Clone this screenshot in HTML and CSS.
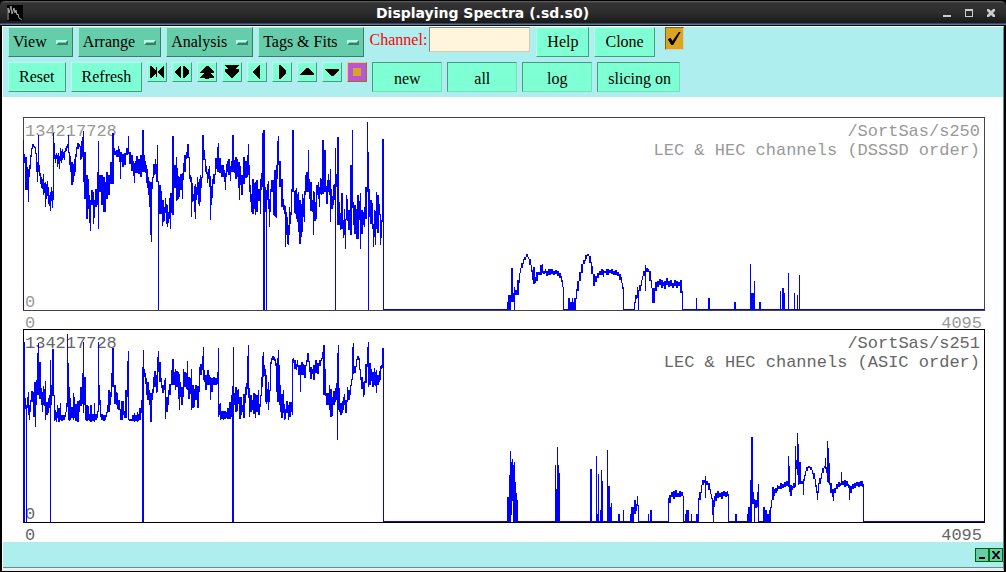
FILE: index.html
```html
<!DOCTYPE html>
<html lang="en">
<head>
  <meta charset="UTF-8">
  <title>Displaying Spectra (.sd.s0)</title>
  <link rel="stylesheet" href="styles.css">
</head>
<body>
  <header class="titlebar">
    <svg class="app-icon" viewBox="0 0 16 16">
      <rect width="16" height="16" fill="#000"/>
      <path d="M1 15V3L2 8L4 1L5 9L7 3L8 8L9 5L10 10L11 9L12 13L15 15" fill="none" stroke="#aaa"/>
    </svg>
    <h1>Displaying Spectra (.sd.s0)</h1>
    <div class="window-buttons">
      <button aria-label="Minimize"><svg viewBox="0 0 10 10"><path d="M1 7h8v2H1z"/></svg></button>
      <button aria-label="Maximize"><svg viewBox="0 0 10 10"><path fill-rule="evenodd" d="M1 1h8v8H1zM2 3v5h6V3z"/></svg></button>
      <button aria-label="Close"><svg viewBox="0 0 10 10"><path d="M1 1h2l2 2 2-2h2v2L7 5l2 2v2H7L5 7 3 9H1V7l2-2-2-2z"/></svg></button>
    </div>
  </header>

  <main class="window">
    <div class="toolbar">
      <div class="row">
        <button class="menu">View <span class="mark"></span></button>
        <button class="menu">Arrange <span class="mark"></span></button>
        <button class="menu">Analysis <span class="mark"></span></button>
        <button class="menu">Tags &amp; Fits <span class="mark"></span></button>
        <div class="channel">
          <label for="channel">Channel:</label>
          <input type="text" id="channel">
        </div>
        <button class="btn">Help</button>
        <button class="btn">Clone</button>
        <input type="checkbox" class="toggle" aria-label="Enable" checked>
      </div>
      <div class="row">
        <button class="btn">Reset</button>
        <button class="btn">Refresh</button>
        <button class="icon" aria-label="Compress"><svg viewBox="0 0 18 18"><path d="M2 3h1l5 5V4h1v10H8v-4l-5 5H2zM15 3h1v12h-1l-5-5V8z"/></svg></button>
        <button class="icon" aria-label="Expand"><svg viewBox="0 0 18 18"><path d="M8 3v12H7L2 10V8l5-5zM10 3h1l5 5v2l-5 5h-1z"/></svg></button>
        <button class="icon" aria-label="Page up"><svg viewBox="0 0 18 18"><path d="M8 3h2l6 6v1h-4l4 4v1h-5v1H7v-1H2v-1l4-4H2V9z"/></svg></button>
        <button class="icon" aria-label="Page down"><svg viewBox="0 0 18 18"><path d="M2 2h14v1l-4 3h4v2l-6 7H8L2 8V6h4L2 3z"/></svg></button>
        <button class="icon" aria-label="Left"><svg viewBox="0 0 18 18"><path d="M11 2h1v14h-1L5 10V8z"/></svg></button>
        <button class="icon" aria-label="Right"><svg viewBox="0 0 18 18"><path d="M6 2h1l6 6v2l-6 6H6z"/></svg></button>
        <button class="icon" aria-label="Up"><svg viewBox="0 0 18 18"><path d="M2 12v-1l6-6h2l6 6v1z"/></svg></button>
        <button class="icon" aria-label="Down"><svg viewBox="0 0 18 18"><path d="M2 6h14v1l-6 6H8L2 7z"/></svg></button>
        <button class="icon stop" aria-label="Select region"><svg viewBox="0 0 18 18"><path d="M5 5h8v8H5z"/></svg></button>
        <button class="btn sunken">new</button>
        <button class="btn sunken">all</button>
        <button class="btn sunken">log</button>
        <button class="btn sunken wide">slicing on</button>
      </div>
    </div>

    <div class="canvas">
      <section class="plot">
        <div class="frame">
          <span class="max">134217728</span>
          <span class="min">0</span>
          <p class="name">/SortSas/s250<br>LEC &amp; HEC channels (DSSSD order)</p>
          <svg class="trace" viewBox="1 1 960 192" preserveAspectRatio="none"><path id="s250"/></svg>
        </div>
        <div class="axis"><span>0</span><span>4095</span></div>
      </section>
      <section class="plot active">
        <div class="frame">
          <span class="max">134217728</span>
          <span class="min">0</span>
          <p class="name">/SortSas/s251<br>LEC &amp; HEC channels (ASIC order)</p>
          <svg class="trace" viewBox="1 1 960 192" preserveAspectRatio="none"><path id="s251"/></svg>
        </div>
        <div class="axis"><span>0</span><span>4095</span></div>
      </section>
    </div>

    <footer class="statusbar">
      <button aria-label="Shrink"><svg viewBox="0 0 10 10"><path d="M2 7h6v2H2z"/></svg></button>
      <button aria-label="Dismiss"><svg viewBox="0 0 10 10"><path d="M1 1h2l2 3 2-3h2v1L6 5l3 3v1H7L5 6 3 9H1V8l3-3-3-3z"/></svg></button>
    </footer>
  </main>

  <script src="spectra.js"></script>
</body>
</html>
```
FILE: styles.css
```css
* {
  margin: 0;
  padding: 0;
  box-sizing: border-box;
}

body {
  height: 100vh;
  display: flex;
  flex-direction: column;
  background: #000;
  font-family: "Liberation Serif", "Times New Roman", serif;
  font-size: 16px;
  overflow: hidden;
}

button {
  font: inherit;
  color: #000;
}

svg {
  display: block;
}

/* title bar */
.titlebar {
  height: 26px;
  display: flex;
  align-items: center;
  padding: 0 10px 0 7px;
  border-top: 1px solid #000;
  border-bottom: 1px solid #000;
  border-radius: 5px 5px 0 0;
  background: linear-gradient(#666 0, #333 2px, #2e2e2e 11px, #191919 22px, #5078a8 23px);
}

.titlebar h1 {
  flex: 1;
  text-align: center;
  font: bold 14px "DejaVu Sans", sans-serif;
  color: #fff;
}

.app-icon {
  width: 16px;
  height: 16px;
}

.window-buttons {
  display: flex;
  gap: 12px;
}

.window-buttons button {
  width: 10px;
  height: 10px;
  border: none;
  background: none;
}

.window-buttons svg {
  width: 10px;
  height: 10px;
  fill: #ccc;
}

/* window body */
.window {
  flex: 1;
  min-height: 0;
  display: flex;
  flex-direction: column;
  margin: 0 2px 1px;
  border: 1px solid #fff;
  border-right-color: #5f8f8f;
  border-bottom: 3px solid #eee;
}

.toolbar {
  display: flex;
  flex-direction: column;
  gap: 5px;
  padding: 0 5px 5px;
  background: #afeeee;
}

.row {
  display: flex;
  align-items: flex-start;
  gap: 5px;
}

.menu,
.btn {
  height: 30px;
  padding: 0 10px;
  border: 1px solid;
  border-color: #b0ffe8 #4a9a80 #4a9a80 #b0ffe8;
  background: #7fffd4;
  white-space: nowrap;
}

.menu {
  display: flex;
  align-items: center;
  justify-content: space-between;
  gap: 9px;
  padding: 0 4px;
  border-color: #a3f5d8 #3c7b66 #3c7b66 #a3f5d8;
  background: #66cdaa;
}

.mark {
  width: 12px;
  height: 5px;
  border: 2px solid;
  border-color: #b5ffe8 #3c7b66 #3c7b66 #b5ffe8;
}

.btn.sunken {
  width: 70px;
  padding-top: 4px;
  border-color: #4a9a80 #70e0ba #70e0ba #4a9a80;
}

.btn.wide {
  width: 83px;
}

.channel {
  display: flex;
  align-items: center;
  gap: 2px;
  padding: 0 1px;
}

.channel label {
  color: #f00;
}

.channel input {
  width: 101px;
  height: 25px;
  border: 1px solid;
  border-color: #888 #d5cbb5 #d5cbb5 #888;
  background: #fff5dc;
}

.toggle {
  appearance: none;
  width: 19px;
  height: 23px;
  margin-left: 5px;
  border: 1px solid;
  border-color: #7a6225 #d5d0c0 #d5d0c0 #7a6225;
  background: #daa520;
}

.toggle:checked::before {
  content: "";
  display: block;
  width: 13px;
  height: 13px;
  margin: 4px 2px;
  background: #000;
  clip-path: polygon(0 55%, 22% 45%, 38% 70%, 85% 0, 100% 0, 42% 100%, 28% 100%);
}

.icon {
  width: 20px;
  height: 20px;
  border: 1px solid;
  border-color: #b0ffe8 #4a9a80 #4a9a80 #b0ffe8;
  background: #7fffd4;
}

.icon svg {
  width: 18px;
  height: 18px;
  shape-rendering: crispEdges;
}

.icon.stop {
  border-color: #ffc84a #a07010 #a07010 #ffc84a;
  background: #ba55d3;
  fill: #daa520;
}

/* spectra */
.canvas {
  flex: 1;
  min-height: 0;
  display: flex;
  flex-direction: column;
  padding: 20px 18px 1px 20px;
  background: #fff;
}

.plot {
  flex: 1;
  min-height: 0;
  display: flex;
  flex-direction: column;
  font: 17px/19px "Liberation Mono", "Courier New", monospace;
  color: #999;
}

.plot.active {
  color: #666;
}

.frame {
  flex: 1;
  min-height: 0;
  display: grid;
  grid-template: minmax(0, 1fr) / minmax(0, 1fr);
  border: 1px solid #444;
}

.active .frame {
  border-color: #000;
}

.frame > * {
  grid-area: 1 / 1;
}

.max {
  padding: 4px 1px;
}

.min {
  align-self: end;
  padding: 0 1px;
  line-height: 15px;
}

.name {
  justify-self: end;
  padding: 4px;
  text-align: right;
}

.trace {
  width: 100%;
  height: 100%;
  overflow: visible;
  fill: #00f;
  shape-rendering: crispEdges;
}

.axis {
  height: 18px;
  display: flex;
  justify-content: space-between;
  padding: 4px 3px 0 2px;
  line-height: 18px;
}

/* status bar */
.statusbar {
  height: 26px;
  display: flex;
  align-items: center;
  justify-content: flex-end;
  background: #afeeee;
  border-bottom: 1px solid #5f8f8f;
}

.statusbar button {
  width: 14px;
  height: 14px;
  border: 1px solid #006400;
  background: #66cdaa;
}

.statusbar svg {
  width: 10px;
  height: 10px;
  margin: 1px;
}
```
FILE: spectra.js
```js
// Each entry is "x,top,bottom" and holds until the next x.
// A lone "x" is the zero line, "x,top" is a bar standing on it.
const BASE = 193;

const spectra = {
  s250: `
    0,23,193 1,37,46 2,40,73 4,50,73 5,52,85 6,48,60 7,38,52 8,31,40 9,27,30 11,29,31 12,30,37 13,36,55 14,45,65 15,18,55
    16,48,59 17,56,67 18,60,71 19,62,72 20,57,78 21,66,76 22,65,90 23,67,82 24,64,79 25,70,87 26,78,89 27,75,94 28,70,84 29,74,91
    30,16,83 31,26,42 32,38,46 33,36,42 34,38,50 35,36,47 36,39,52 37,31,44 38,34,46 39,32,43 40,35,41 41,34,43 42,31,35 43,29,34
    44,27,31 45,18,36 46,35,48 47,39,55 48,45,68 50,47,65 51,42,59 52,37,55 53,30,40 54,26,32 56,27,30 57,29,43 58,24,42 59,20,40
    60,14,65 61,35,82 63,58,102 65,62,92 66,78,106 67,83,114 68,73,88 70,75,107 71,83,101 72,72,90 74,55,88 75,24,112
    76,58,75 78,58,88 80,60,95 82,65,95 83,55,82 85,58,78 87,45,67 89,16,67 91,31,38 92,34,38 93,33,40 95,29,40 96,32,45 97,35,62
    98,35,45 99,37,50 101,36,48 103,31,38 105,19,37 106,35,47 108,38,54 110,44,59 111,46,66 112,44,56 113,39,56 115,42,57 117,38,60
    119,13,55 121,38,55 122,44,56 123,48,66 124,52,71 125,60,78 126,64,90 127,65,118 128,65,125 129,60,72 130,47,58 132,42,57
    133,47,65 134,28,65 135,68,193 136,68,97 138,74,97 139,83,109 140,83,105 141,90,104 142,81,96 143,87,107 144,88,110 145,95,106
    146,81,102 147,76,112 148,76,96 149,19,98 151,48,71 153,40,84 154,51,83 155,59,82 156,60,80 157,57,73 159,56,82 160,46,63
    161,38,55 163,35,42 164,27,41 166,55,62 167,58,65 168,60,100 169,66,85 170,77,84 171,69,95 172,67,102 173,70,83 174,60,78
    175,65,87 176,62,89 177,58,85 178,60,71 179,18,43 181,33,43 182,44,55 183,49,57 184,55,66 185,52,62 186,49,70 187,59,103
    188,69,88 189,62,81 190,57,67 192,41,52 194,30,55 195,26,55 196,41,56 198,48,60 200,48,60 201,53,65 202,56,73 203,47,60
    204,44,55 205,42,58 207,49,64 208,44,55 209,18,55 211,43,56 212,40,62 214,42,60 215,45,71 216,45,83 217,49,68 218,58,78
    220,40,67 222,44,61 224,38,60 225,27,58 226,48,75 227,68,85 228,77,95 229,62,97 231,66,92 232,65,98 233,63,95 235,72,84
    237,62,97 238,56,73 239,16,70 240,13,193 242,70,95 243,73,193 244,67,83 245,64,92 246,82,110 247,72,95 248,63,75 250,63,98
    251,53,99 252,53,100 253,48,101
    254,24,62 255,19,48 256,44,70 258,62,90 260,82,93 261,88,97 262,89,130 263,95,118 264,100,127 265,108,128 266,90,118
    267,95,107 268,72,98 269,13,75 271,80,96 272,73,97 273,71,102 274,77,105 275,75,115 276,83,127 278,87,120 279,77,115 280,81,100
    281,74,105 282,58,78 283,55,75 285,33,75 286,62,82 287,65,94 289,83,95 290,74,118 291,75,104 292,85,104 293,68,102 294,68,78
    295,65,82 296,70,90 297,61,77 298,62,78 299,23,77 301,33,75 303,69,87 304,63,87 305,57,75 306,63,78 307,52,105 308,72,92
    309,79,92 310,68,88 311,67,83 312,31,193 313,57,70 314,20,108 316,85,108 317,96,113 318,76,112 320,103,121 321,92,118
    322,102,132 323,78,103 324,82,104 325,93,113 327,48,118 329,13,91 330,85,108 331,88,117 333,92,122 334,78,122 336,84,103
    337,76,132 338,93,117 340,95,108 341,90,110 342,70,102 344,5,75 345,35,193 346,72,100 347,83,107 349,86,112 350,107,130
    351,93,120 352,94,128 353,75,112 354,78,116 356,87,98 357,107,128 358,103,121 359,22,105 360,22,193 361
    484,185,193 485,178,193 488,151,185 490,176,185 491,170,193 492,173,178 494,163,178 496,156,166 497,151,156 498,146,151
    500,142,147 501,140,143 503,137,140 505,140,142 506,142,148 508,148,155 509,153,163 510,150,167 512,160,166 513,155,164
    515,155,158 517,148,158 519,147,156 520,154,157 522,152,156 523,154,159 525,152,158 528,152,157 530,154,158 532,153,157
    534,154,159 536,156,161 538,159,165 539,163,170 540,170,193 541 545,181,193 547,185,193 549,181,193 550,185,193 551,181,193
    553,172,178 554,164,174 556,155,164 558,147,156 560,143,147 562,138,142 564,137,139 566,139,146 568,149,157 570,157,169
    572,159,165 574,156,161 576,154,158 578,152,158 580,153,160 581,154,156 583,152,158 586,153,156 588,152,157 590,154,158
    592,153,158 594,155,159 596,157,163 598,160,166 599,166,172 600,170,193 601 611,185,193 612,178,182 614,170,181 615,173,193
    616,168,174 618,163,169 619,159,163 620,154,159 622,148,174 623,151,155 625,152,155 626,154,164 628,163,171 629,171,186
    632,165,174 634,164,170 636,162,168 638,163,171 640,165,169 641,164,172 643,161,168 645,164,170 647,163,169 649,166,171
    651,163,169 653,164,171 655,165,169 657,163,176 659,174,193 660 673,181 674 685,181 687 711,185 713 727,147 728,176
    731,164 732 736,185 738 757,174 758 759,171 761,176 762 765,156 766 771,176 772 774,178 775 776,158 777`,
  s251: `
    0,13,193 1,13,193 2,69,80 3,76,193 4,68,79 5,63,86 6,76,91 7,71,83 8,62,73 10,63,88 11,53,88 12,53,98 13,51,76 14,24,66
    15,14,66 16,33,70 18,59,76 19,63,83 20,57,76 21,60,77 22,52,91 23,73,86 25,69,84 26,66,79 27,31,193 28,56,76 29,20,67
    31,80,92 32,81,91 33,83,93 34,76,89 35,79,93 37,74,91 38,86,92 40,86,91 42,83,88 43,74,83 44,5,78 45,34,91 46,58,92
    47,69,91 48,78,89 50,64,91 51,68,89 52,75,92 54,72,93 56,71,83 57,58,77 59,44,75 60,13,84 61,48,76 62,48,91 63,76,92
    65,77,91 66,85,92 67,76,93 69,85,92 71,74,93 72,85,91 74,82,89 75,13,75 76,56,76 77,71,88 78,85,91 80,86,92 82,86,91
    83,83,88 84,76,84 85,61,83 87,63,76 88,44,68 89,19,58 91,56,75 93,63,76 94,64,80 95,71,81 97,82,91 98,72,91 100,72,86
    101,82,89 102,61,89 104,32,68 105,22,91 106,90,92 109,86,92 111,84,93 112,86,92 114,83,93 115,85,92 116,79,91 118,71,84
    119,38,193 120,21,193 121,40,48 122,44,55 123,49,66 124,53,71 126,61,76 127,64,93 129,60,71 130,48,64 131,42,58 133,46,64
    134,28,63 135,22,43 136,33,53 138,49,59 139,56,64 141,51,61 142,49,90 143,68,83 145,61,76 146,55,66 148,41,53 149,30,56
    151,43,56 152,40,61 153,42,58 155,43,70 156,45,81 157,53,68 158,58,76 160,40,68 161,43,58 163,44,60 164,32,61 165,48,70
    167,49,65 168,40,81 169,56,79 171,60,78 172,56,71 174,57,79 176,38,63 177,35,46 179,27,41 180,18,51 181,41,53 182,46,61
    184,41,56 186,46,56 187,48,71 188,49,63 190,48,56 192,49,56 194,43,55 195,19,88 196,75,86 197,74,91 198,82,90 200,82,91
    201,82,90 203,83,89 204,79,90 206,73,90 208,66,88 209,57,193 210,18,193 211,64,76 212,58,83 214,61,82 215,60,75 216,68,90
    218,68,86 219,76,83 220,65,89 222,58,74 223,54,66 224,27,60 225,16,69 226,59,88 227,66,83 229,71,81 230,64,85 232,65,89
    233,66,83 235,61,86 236,75,86 237,66,78 238,48,63 239,27,58 240,23,48 241,36,47
    242,40,73 243,46,75 244,60,73 245,53,81 246,61,73 247,33,46 248,29,35 249,27,31 251,28,32
    252,30,37 253,34,63 254,29,73 255,21,73 256,36,76 257,56,83 258,65,89 260,61,84 261,75,91 262,80,90 263,72,84 265,76,91
    266,73,88 268,73,83 269,30,86 270,29,34 271,31,40 273,35,41 274,31,38 275,36,46 277,36,63 278,33,46 280,35,46 281,36,49
    283,31,37 284,24,33 286,34,43 287,38,50 289,40,45 290,36,51 292,31,44 294,34,45 296,31,37 298,29,32 299,23,30 300,16,66
    302,40,67 303,64,76 306,56,81 307,60,88 309,68,87 310,62,76 312,59,73 313,54,71 314,24,111 315,16,81 316,59,83 317,74,86
    319,72,84 320,68,81 321,65,76 322,71,84 324,58,73 325,61,71 327,56,66 328,50,57 329,18,51 330,14,45 331,37,44 333,30,34
    334,27,31 336,29,41 337,40,51 338,48,60 340,53,68 341,52,66 342,35,54 344,18,38 345,13,58 346,34,56 348,40,52 349,43,58
    351,39,56 352,43,57 353,41,64 354,46,56 356,42,53 357,37,51 358,36,40 359,19,39 360,19,193 361
    484,168 486,146 487,122 488,133,186 489,130,172 490,136 491,133 492,153 493,164 494,171 495 532,136 533,160 534,118 535,136
    536,144 537 567,140 569 573,127 574,185 575,145 576 577,181 578,141 579,152 580 584,121 585,157 587,178 588,174 589
    595,185 597 600,181 601 607,185 608,178,193 611,171,185 613,175,182 614,167,177 615,176,193 616 625,185 626 627,181 629
    645,169,193 646,166,174 648,163,168 650,162,170 652,161,168 654,164,168 656,162,168 658,163,167 660,167,193 661 662,185
    663,181 666 668,185 669 673,185 675,169,193 676,163,171 678,156,164 679,151,156 681,151,154 682,147,169 683,152,156
    685,154,161 687,160,165 688,165,170 689,169,186 690,171,193 691,167,178 692,164,172 694,162,169 696,164,168 698,163,170
    700,162,167 702,163,168 704,162,167 705,165,193 706 712,185 714 724,185 725,178 727,151 728,108,193 729,108,175 730,163,175
    731,170,193 732,171,179 734,163,178 735,155,193 736 740,178 742,181 744,185 746,181 747,178 748,171,179 749,158,171
    751,160,167 752,159,164 754,156,162 755,157,160 757,154,160 759,155,159 761,153,158 763,152,157 765,127,158 766,137,163
    767,156,167 769,157,161 770,154,159 772,117,158 773,131,140 774,104,146 775,115,156 776,133,155 778,152,155 780,150,166
    781,146,152 782,142,147 783,138,142 785,137,139 787,138,141 789,141,145 790,144,150 792,150,158 793,156,164 794,162,171
    795,154,164 796,149,155 798,144,148 799,139,144 801,137,139 802,129,140 803,138,144 804,112,153 805,119,154 806,134,156
    807,154,164 809,160,168 810,160,172 811,159,164 813,155,160 815,153,158 817,154,157 818,143,156 819,152,156 821,151,158
    823,152,157 825,155,159 826,156,171 827,157,164 829,155,160 831,154,159 833,153,157 835,153,158 837,152,157 839,152,158
    840,155,193 841`
};

function tracePath(text) {
  const columns = text.trim().split(/\s+/).map(entry => {
    const [x, top = BASE - 1, bottom = BASE] = entry.split(",").map(Number);
    return { x, top, bottom };
  });

  let d = "";
  columns.forEach((col, i) => {
    const next = columns[i + 1] ? columns[i + 1].x : 961;
    d += `M${col.x} ${col.top}H${next}V${col.bottom}H${col.x}Z`;

    // join a column that does not touch the previous one
    const prev = columns[i - 1];
    if (prev && prev.bottom < col.top) {
      d += `M${col.x} ${prev.bottom - 1}h1V${col.top}h-1Z`;
    } else if (prev && prev.top > col.bottom) {
      d += `M${col.x} ${col.bottom}h1V${prev.top + 1}h-1Z`;
    }
  });
  return d;
}

for (const id in spectra) {
  document.getElementById(id).setAttribute("d", tracePath(spectra[id]));
}
```
